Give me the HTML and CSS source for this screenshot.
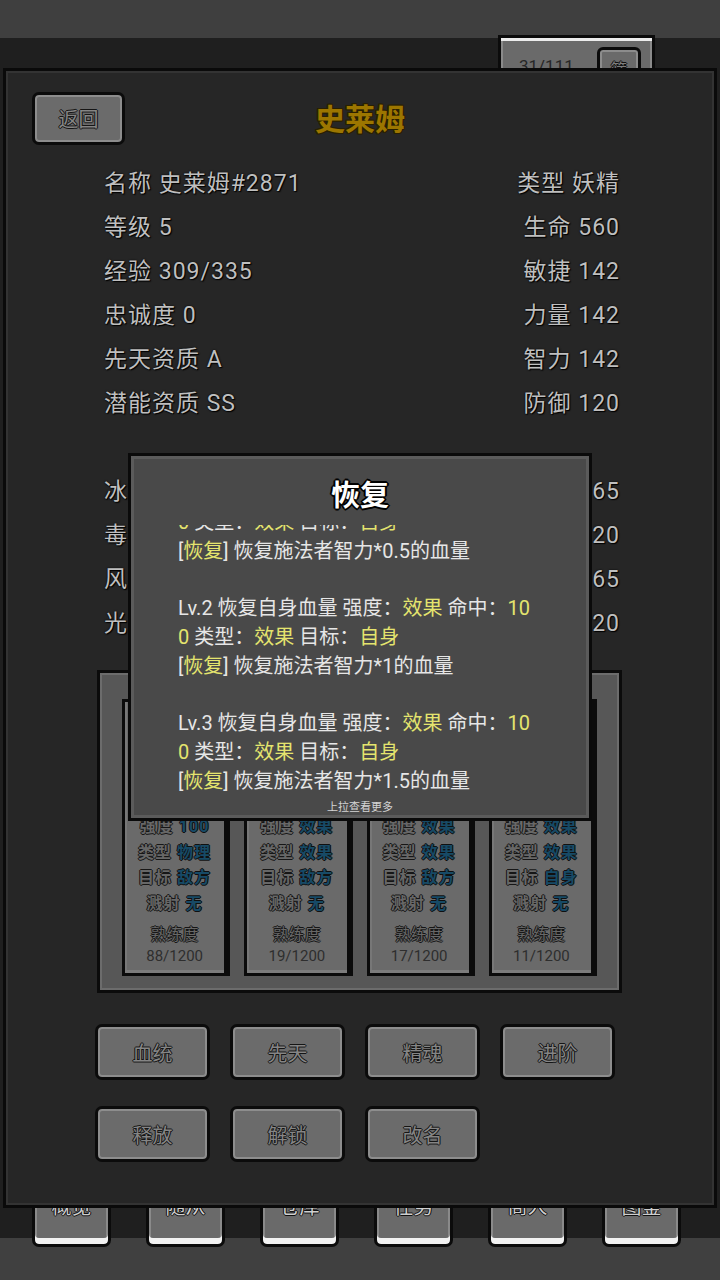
FILE: index.html
```html
<!DOCTYPE html>
<html lang="zh-CN">
<head>
  <meta charset="UTF-8">
  <meta name="viewport" content="width=device-width, initial-scale=1.0">
  <title>史莱姆</title>
  <link rel="stylesheet" href="styles.css">
</head>
<body>

  <div class="app">
    <div class="topbar"></div>

    <div class="main">
      <div class="count-tab">
        <span class="count">31/111</span>
        <span class="filter-btn">筛</span>
      </div>

      <div class="nav">
        <div class="nav-tab">概览</div>
        <div class="nav-tab">随从</div>
        <div class="nav-tab">仓库</div>
        <div class="nav-tab">任务</div>
        <div class="nav-tab">商人</div>
        <div class="nav-tab">图鉴</div>
      </div>
    </div>

    <div class="bottombar"></div>

    <div class="panel">
      <div class="panel-head">
        <button class="px-btn back-btn">返回</button>
        <h1 class="pet-name">史莱姆</h1>
        <span></span>
      </div>

      <div class="stats">
        <div class="stat">名称 史莱姆#2871</div>
        <div class="stat right">类型 妖精</div>
        <div class="stat">等级 5</div>
        <div class="stat right">生命 560</div>
        <div class="stat">经验 309/335</div>
        <div class="stat right">敏捷 142</div>
        <div class="stat">忠诚度 0</div>
        <div class="stat right">力量 142</div>
        <div class="stat">先天资质 A</div>
        <div class="stat right">智力 142</div>
        <div class="stat">潜能资质 SS</div>
        <div class="stat right">防御 120</div>
        <div class="stat-gap"></div>
        <div class="stat">冰抗性 20</div>
        <div class="stat right">火抗性 65</div>
        <div class="stat">毒抗性 65</div>
        <div class="stat right">雷抗性 20</div>
        <div class="stat">风抗性 20</div>
        <div class="stat right">土抗性 65</div>
        <div class="stat">光抗性 65</div>
        <div class="stat right">暗抗性 20</div>
      </div>

      <div class="skills">
        <div class="skill-card">
          <div class="skill-name">撞击</div>
          <div class="skill-row"><span class="k">强度</span> <span class="v">100</span></div>
          <div class="skill-row"><span class="k">类型</span> <span class="v">物理</span></div>
          <div class="skill-row"><span class="k">目标</span> <span class="v">敌方</span></div>
          <div class="skill-row"><span class="k">溅射</span> <span class="v">无</span></div>
          <div class="skill-exp">熟练度</div>
          <div class="skill-num">88/1200</div>
        </div>
        <div class="skill-card">
          <div class="skill-name">减速</div>
          <div class="skill-row"><span class="k">强度</span> <span class="v">效果</span></div>
          <div class="skill-row"><span class="k">类型</span> <span class="v">效果</span></div>
          <div class="skill-row"><span class="k">目标</span> <span class="v">敌方</span></div>
          <div class="skill-row"><span class="k">溅射</span> <span class="v">无</span></div>
          <div class="skill-exp">熟练度</div>
          <div class="skill-num">19/1200</div>
        </div>
        <div class="skill-card">
          <div class="skill-name">中毒</div>
          <div class="skill-row"><span class="k">强度</span> <span class="v">效果</span></div>
          <div class="skill-row"><span class="k">类型</span> <span class="v">效果</span></div>
          <div class="skill-row"><span class="k">目标</span> <span class="v">敌方</span></div>
          <div class="skill-row"><span class="k">溅射</span> <span class="v">无</span></div>
          <div class="skill-exp">熟练度</div>
          <div class="skill-num">17/1200</div>
        </div>
        <div class="skill-card">
          <div class="skill-name">恢复</div>
          <div class="skill-row"><span class="k">强度</span> <span class="v">效果</span></div>
          <div class="skill-row"><span class="k">类型</span> <span class="v">效果</span></div>
          <div class="skill-row"><span class="k">目标</span> <span class="v">自身</span></div>
          <div class="skill-row"><span class="k">溅射</span> <span class="v">无</span></div>
          <div class="skill-exp">熟练度</div>
          <div class="skill-num">11/1200</div>
        </div>
      </div>

      <div class="actions">
        <button class="px-btn">血统</button>
        <button class="px-btn">先天</button>
        <button class="px-btn">精魂</button>
        <button class="px-btn">进阶</button>
        <button class="px-btn">释放</button>
        <button class="px-btn">解锁</button>
        <button class="px-btn">改名</button>
      </div>

      <div class="modal">
        <h2 class="modal-title">恢复</h2>
        <div class="modal-scroll">
          <div class="modal-text">
            <div class="line">Lv.1 恢复自身血量 强度：<em>效果</em> 命中：<em>10</em></div>
            <div class="line"><em>0</em> 类型：<em>效果</em> 目标：<em>自身</em></div>
            <div class="line">[<em>恢复</em>] 恢复施法者智力*0.5的血量</div>
            <div class="line"></div>
            <div class="line">Lv.2 恢复自身血量 强度：<em>效果</em> 命中：<em>10</em></div>
            <div class="line"><em>0</em> 类型：<em>效果</em> 目标：<em>自身</em></div>
            <div class="line">[<em>恢复</em>] 恢复施法者智力*1的血量</div>
            <div class="line"></div>
            <div class="line">Lv.3 恢复自身血量 强度：<em>效果</em> 命中：<em>10</em></div>
            <div class="line"><em>0</em> 类型：<em>效果</em> 目标：<em>自身</em></div>
            <div class="line">[<em>恢复</em>] 恢复施法者智力*1.5的血量</div>
            <div class="line"></div>
            <div class="line">Lv.4 恢复自身血量 强度：<em>效果</em> 命中：<em>10</em></div>
            <div class="line"><em>0</em> 类型：<em>效果</em> 目标：<em>自身</em></div>
            <div class="line">[<em>恢复</em>] 恢复施法者智力*2的血量</div>
          </div>
        </div>
        <div class="modal-hint">上拉查看更多</div>
      </div>
    </div>
  </div>

</body>
</html>
```

FILE: styles.css
```css
* {
  box-sizing: border-box;
}
body {
  margin: 0;
  background-color: #1f1f1f;
  font-family: Roboto, "Noto Sans CJK SC", sans-serif;
}
.app {
  position: relative;
  width: 720px;
  height: 1280px;
  display: flex;
  flex-direction: column;
  overflow: hidden;
}
.topbar {
  height: 38px;
  background-color: #3f3f3f;
}
.main {
  flex: 1;
  display: flex;
  flex-direction: column;
  justify-content: space-between;
  background-color: #1f1f1f;
}
.bottombar {
  height: 42px;
  background-color: #404040;
}

/* background page bits that peek out */
.count-tab {
  align-self: flex-end;
  display: flex;
  align-items: flex-start;
  width: 157px;
  height: 50px;
  margin: -3px 65px 0 0;
  padding: 7px 0 0 18px;
  background-color: #6a6a6a;
  border: 3px solid #0b0b0b;
  border-bottom: none;
  box-shadow: inset 0 3px 0 #ececec, inset 2px 0 0 #8a8a8a, inset -2px 0 0 #8a8a8a;
}
.count {
  margin-top: 11px;
  font-size: 17px;
  color: #262626;
}
.filter-btn {
  width: 44px;
  height: 36px;
  margin-left: 23px;
  margin-top: 2px;
  padding-top: 6px;
  text-align: center;
  font-size: 17px;
  color: #7c7c7c;
  background-color: #6a6a6a;
  border: 3px solid #0b0b0b;
  border-radius: 6px 6px 0 0;
  box-shadow: inset 0 0 0 2px #8c8c8c;
  text-shadow: 1px 0 #111, -1px 0 #111, 0 1px #111, 0 -1px #111;
}
.nav {
  position: relative;
  display: flex;
  gap: 35px;
  padding-left: 32px;
  margin-bottom: -9px;
}
.nav-tab {
  width: 79px;
  height: 62px;
  padding-top: 6px;
  text-align: center;
  font-size: 20px;
  line-height: 26px;
  color: #cfcfcf;
  background-color: #6a6a6a;
  border: 3px solid #0b0b0b;
  border-radius: 0 0 7px 7px;
  box-shadow: inset 0 -6px 0 #f2f2f2, inset 2px 0 0 #8a8a8a, inset -2px 0 0 #8a8a8a;
  text-shadow: 1px 0 #111, -1px 0 #111, 0 1px #111, 0 -1px #111;
}

/* pet detail panel */
.panel {
  position: absolute;
  top: 68px;
  left: 3px;
  width: 714px;
  height: 1140px;
  background-color: #262626;
  border: 3px solid #0a0a0a;
  box-shadow: inset 0 0 0 2px #333333;
}
.px-btn {
  font-family: Roboto, "Noto Sans CJK SC", sans-serif;
  font-size: 20px;
  color: #858585;
  background-color: #6b6b6b;
  border: 3px solid #0b0b0b;
  border-radius: 7px;
  box-shadow: inset 0 0 0 2px #8d8d8d;
  text-shadow: 1px 0 #151515, -1px 0 #151515, 0 1px #151515, 0 -1px #151515;
  padding: 0;
  cursor: pointer;
}
.panel-head {
  display: grid;
  grid-template-columns: 1fr auto 1fr;
  align-items: center;
  padding: 19px 26px 0;
}
.back-btn {
  justify-self: start;
  width: 93px;
  height: 53px;
}
.pet-name {
  margin: 0;
  padding-top: 3px;
  font-size: 30px;
  font-weight: 700;
  line-height: 53px;
  color: #9c7600;
  text-shadow: 1px 0 #2a2000, -1px 0 #2a2000, 0 1px #2a2000, 0 -1px #2a2000, 1px 1px #2a2000, -1px -1px #2a2000, 1px -1px #2a2000, -1px 1px #2a2000;
}
.stats {
  display: grid;
  grid-template-columns: 1fr 1fr;
  grid-auto-rows: 44px;
  margin-top: 16px;
  padding: 0 94px 0 98px;
}
.stat {
  font-size: 23px;
  line-height: 44px;
  letter-spacing: 1px;
  color: #bfbfbf;
  white-space: nowrap;
  text-shadow: 1px 1px 1px #000, 0 0 2px #000;
}
.stat.right {
  text-align: right;
}
.stat-gap {
  grid-column: 1 / -1;
}

.skills {
  display: grid;
  grid-template-columns: repeat(4, 1fr);
  gap: 14px;
  width: 525px;
  height: 323px;
  margin: 24px 0 0 91px;
  padding: 26px 22px 14px 22px;
  background-color: #575757;
  border: 3px solid #0b0b0b;
  box-shadow: inset 0 0 0 2px #6c6c6c;
}
.skill-card {
  display: flex;
  flex-direction: column;
  justify-content: flex-end;
  align-items: center;
  padding-bottom: 7px;
  background-color: #6a6a6a;
  border: 3px solid #0b0b0b;
  border-right-width: 6px;
  box-shadow: inset 0 -3px 0 #7c7c7c, inset 2px 0 0 #777;
}
.skill-name {
  margin-bottom: 20px;
  font-size: 18px;
  line-height: 30px;
  color: #ddd;
}
.skill-row {
  font-size: 16px;
  font-weight: 700;
  line-height: 25.5px;
  letter-spacing: 1px;
  white-space: nowrap;
}
.k,
.skill-exp {
  color: #676767;
  text-shadow: 1px 0 #161616, -1px 0 #161616, 0 1px #161616, 0 -1px #161616;
}
.v {
  color: #174a66;
  text-shadow: 1px 0 #101010, -1px 0 #101010, 0 1px #101010, 0 -1px #101010;
}
.skill-exp {
  margin-top: 8px;
  font-size: 16px;
  line-height: 22px;
}
.skill-num {
  font-size: 15px;
  line-height: 20px;
  color: #2e2e2e;
}

.actions {
  display: grid;
  grid-template-columns: repeat(4, 115px);
  grid-auto-rows: 56px;
  gap: 26px 20px;
  margin: 31px 0 0 89px;
}

/* skill detail popup */
.modal {
  position: absolute;
  top: 382px;
  left: 122px;
  width: 464px;
  height: 368px;
  display: flex;
  flex-direction: column;
  background-color: #494949;
  border: 3px solid #0a0a0a;
  box-shadow: inset 0 0 0 3px #5b5b5b;
}
.modal-title {
  margin: 0;
  padding: 18px 0 7px;
  text-align: center;
  font-size: 29px;
  font-weight: 700;
  line-height: 44px;
  color: #ffffff;
  text-shadow: 2px 0 #000, -2px 0 #000, 0 2px #000, 0 -2px #000, 1px 1px #000, -1px -1px #000, 1px -1px #000, -1px 1px #000;
}
.modal-scroll {
  height: 270px;
  overflow: hidden;
  padding-left: 47px;
}
.modal-text {
  margin-top: -46px;
  font-size: 20px;
  line-height: 28.75px;
  color: #e6e6e6;
}
.line {
  height: 28.75px;
  white-space: nowrap;
}
.modal-text em {
  font-style: normal;
  color: #e4e46e;
}
.modal-hint {
  margin-top: 3px;
  text-align: center;
  font-size: 11px;
  line-height: 20px;
  color: #d4d4d4;
}
```
